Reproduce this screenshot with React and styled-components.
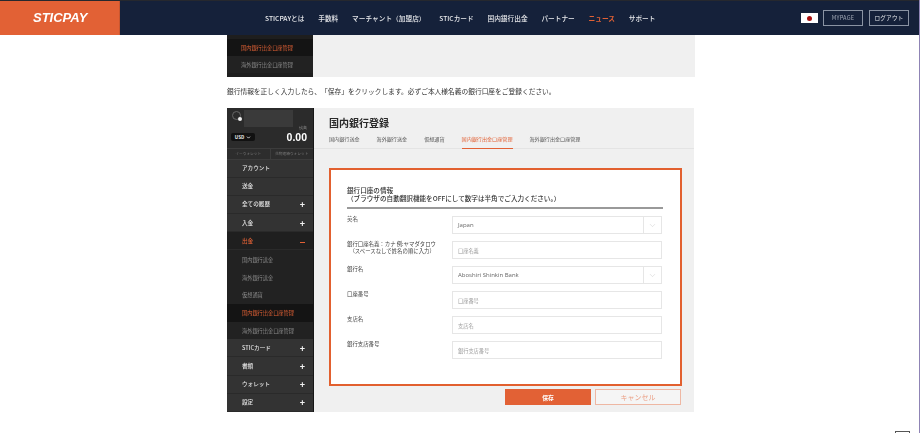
import React from 'react';
import styled, { createGlobalStyle } from 'styled-components';
import { ChevronDown } from 'lucide-react';

const GlobalStyle = createGlobalStyle`
  html, body {
    margin: 0;
    padding: 0;
    background: #fff;
    overflow: hidden;
  }
  body {
    font-family: "Noto Sans CJK JP", "Noto Sans", sans-serif;
    color: #333;
  }
  * {
    box-sizing: border-box;
  }
`;

const Page = styled.div`
  width: 920px;
  height: 433px;
  position: relative;
  overflow: hidden;
  border-right: 1px solid #8f84b5;
  filter: blur(0.3px);
`;

const Header = styled.header`
  height: 35px;
  display: flex;
  background: #15213a;
  border-top: 1px solid #26282e;
`;

const Logo = styled.div`
  width: 120px;
  background: #e26135;
  border-right: 1px solid #c9562f;
  color: #fff;
  font-family: "Liberation Sans", sans-serif;
  font-style: italic;
  font-weight: 700;
  font-size: 13px;
  line-height: 34px;
  padding-left: 33px;
`;

const Nav = styled.nav`
  display: flex;
  align-items: center;
  gap: 13.75px;
  margin-left: 145px;
  height: 34px;
`;

const NavItem = styled.span`
  font-size: 6.7px;
  font-weight: ${p => (p.$active ? 700 : 500)};
  white-space: nowrap;
  color: ${p => (p.$active ? '#e26135' : '#e8e9ec')};
`;

const HeaderRight = styled.div`
  margin-left: auto;
  margin-right: 10px;
  height: 34px;
  display: flex;
  align-items: center;
`;

const Flag = styled.div`
  width: 17px;
  height: 10px;
  background: #fff;
  display: flex;
  align-items: center;
  justify-content: center;
  margin-right: 5px;
  &::after {
    content: '';
    width: 5px;
    height: 5px;
    border-radius: 50%;
    background: #a81010;
  }
`;

const HeaderButton = styled.div`
  width: 40px;
  height: 16px;
  margin-left: ${p => (p.$spaced ? '6px' : '0')};
  border: 1px solid #8a93a3;
  color: ${p => (p.$dim ? '#a3aab7' : '#dfe2e7')};
  font-size: 5.6px;
  display: flex;
  align-items: center;
  justify-content: center;
  letter-spacing: 0.2px;
`;

const Column = styled.main`
  width: 468px;
  margin-left: 227px;
`;

const TopCard = styled.section`
  height: 42px;
  display: flex;
  background: #f0f0f0;
`;

const TopSide = styled.div`
  width: 86px;
  background: #1e1e1e;
  padding-top: 4px;
`;

const Intro = styled.p`
  margin: 0;
  height: 31px;
  font-size: 6.72px;
  line-height: 29px;
  color: #333;
  text-spacing-trim: space-all;
  white-space: nowrap;
`;

const Card = styled.section`
  width: 467px;
  height: 304px;
  display: flex;
  background: #f0f0f0;
`;

const Side = styled.aside`
  width: 87px;
  background: #2d2d2d;
  border-right: 1px solid #161616;
  display: flex;
  flex-direction: column;
`;

const Balance = styled.div`
  height: 40px;
  background: #2b2b2b;
  position: relative;
  padding: 2px 4px 0 17px;
`;

const Avatar = styled.div`
  position: absolute;
  left: 5px;
  top: 3px;
  width: 9px;
  height: 9px;
  border-radius: 50%;
  border: 1px solid #666;
  &::after {
    content: '';
    position: absolute;
    right: -2px;
    bottom: -2px;
    width: 4px;
    height: 4px;
    border-radius: 50%;
    background: #eee;
  }
`;

const NameBox = styled.div`
  width: 49px;
  height: 17px;
  background: #3a3a3a;
`;

const BalanceRow = styled.div`
  position: absolute;
  left: 4px;
  right: 6px;
  top: 24px;
  display: flex;
  justify-content: space-between;
  align-items: center;
`;

const CurrencyPill = styled.div`
  width: 24px;
  height: 8px;
  border-radius: 2px;
  background: #111;
  color: #eee;
  font-size: 4.5px;
  font-weight: 700;
  display: flex;
  align-items: center;
  justify-content: center;
  gap: 2px;
`;

const Amount = styled.div`
  color: #fff;
  font-family: "Liberation Sans", sans-serif;
  font-weight: 700;
  font-size: 10.5px;
  line-height: 10px;
  position: relative;
  &::before {
    content: '残高';
    position: absolute;
    right: 0;
    top: -6px;
    color: #888;
    font-size: 3.6px;
    line-height: 5px;
    font-weight: 400;
  }
`;

const WalletTabs = styled.div`
  height: 12px;
  display: flex;
  border-top: 1px solid #3c3c3c;
  border-bottom: 1px solid #3c3c3c;
`;

const WalletTab = styled.div`
  flex: 1;
  color: #777;
  font-size: 3.7px;
  line-height: 10px;
  text-align: center;
  white-space: nowrap;
  & + & {
    border-left: 1px solid #3c3c3c;
  }
`;

const MenuRow = styled.div`
  height: 18.4px;
  display: flex;
  align-items: center;
  justify-content: space-between;
  padding: 0 8px 0 15px;
  background: #333;
  border-bottom: 1px solid #2a2a2a;
  color: #e4e4e4;
  font-size: 5.6px;
  font-weight: 500;
`;

const OpenRow = styled(MenuRow)`
  background: #1f1f1f;
  color: #e26135;
`;

const SubRow = styled.div`
  height: ${p => (p.$top ? '17px' : '18px')};
  display: flex;
  align-items: center;
  padding-left: ${p => (p.$top ? '14px' : '15px')};
  white-space: nowrap;
  background: ${p => (p.$active ? '#141414' : '#222')};
  color: ${p => (p.$active ? '#e26135' : '#8c8c8c')};
  font-size: 5.2px;
`;

const Sign = styled.span`
  color: #f2f2f2;
  font-family: "Liberation Sans", sans-serif;
  font-size: 9px;
  font-weight: 700;
  line-height: 9px;
  padding-top: 3px;
`;

const MinusSign = styled.span`
  width: 5px;
  height: 1.5px;
  margin-top: 3px;
  background: #e26135;
`;

const Content = styled.div`
  flex: 1;
  display: flex;
  flex-direction: column;
`;

const ContentHead = styled.div`
  height: 41px;
  padding: 7px 0 0 15px;
  border-bottom: 1px solid #e4e4e4;
`;

const Title = styled.h1`
  margin: 0;
  font-size: 10px;
  line-height: 15px;
  font-weight: 700;
  color: #2a2a2a;
`;

const Tabs = styled.div`
  display: flex;
  gap: 17px;
  margin-top: 1px;
`;

const Tab = styled.div`
  height: 18px;
  font-size: 5.1px;
  line-height: 15px;
  white-space: nowrap;
  color: ${p => (p.$active ? '#e26135' : '#555')};
  border-bottom: ${p => (p.$active ? '1px solid #e26135' : '0')};
`;

const FormBox = styled.div`
  width: 353px;
  height: 218px;
  margin: 19px 0 0 15px;
  background: #fff;
  border: 2px solid #e2602f;
  padding: 16px 17px 0 16px;
`;

const FormTitle = styled.div`
  height: 23px;
  border-bottom: 2px solid #999;
  font-size: 6.6px;
  line-height: 8px;
  font-weight: 500;
  color: #333;
  white-space: pre;
`;

const FormRows = styled.div`
  display: flex;
  flex-direction: column;
  gap: 7px;
  margin-top: 7px;
`;

const FormRow = styled.div`
  display: flex;
  height: 18px;
`;

const Label = styled.div`
  width: 105px;
  font-size: 5.4px;
  line-height: 7px;
  color: #444;
  white-space: pre;
`;

const Field = styled.div`
  width: 210px;
  height: 18px;
  background: #fff;
  border: 1px solid #e6e6e6;
  display: flex;
  align-items: center;
  padding-left: 5px;
  font-family: ${p => (p.$value ? '"Open Sans", sans-serif' : 'inherit')};
  font-size: ${p => (p.$value ? '6px' : '5.2px')};
  color: ${p => (p.$value ? '#666' : '#999')};
`;

const FieldText = styled.span`
  flex: 1;
`;

const SelectArrow = styled.span`
  width: 18px;
  height: 16px;
  border-left: 1px solid #e6e6e6;
  color: #bbb;
  display: flex;
  align-items: center;
  justify-content: center;
`;

const Actions = styled.div`
  display: flex;
  gap: 4px;
  justify-content: flex-end;
  width: 352px;
  margin: 3px 0 0 15px;
`;

const SaveButton = styled.div`
  width: 86px;
  height: 16px;
  background: #e26135;
  color: #fff;
  font-size: 5.8px;
  font-weight: 700;
  display: flex;
  align-items: center;
  justify-content: center;
`;

const CancelButton = styled.div`
  width: 86px;
  height: 16px;
  background: #f5f5f5;
  border: 1px solid #eeb7a3;
  color: #eb9e83;
  font-size: 7px;
  display: flex;
  align-items: center;
  justify-content: center;
`;

const ScrollTop = styled.div`
  position: absolute;
  left: 895px;
  top: 431px;
  width: 15px;
  height: 10px;
  border: 1px solid #555;
  background: #fff;
`;

const navItems = ['STICPAYとは', '手数料', 'マーチャント（加盟店）', 'STICカード', '国内銀行出金', 'パートナー', 'ニュース', 'サポート'];
const tabs = ['国内銀行送金', '海外銀行送金', '仮想通貨', '国内銀行出金口座管理', '海外銀行出金口座管理'];

const fields = [
  { label: '英名', text: 'Japan', select: true, value: true },
  { label: '銀行口座名義：カナ 例:ヤマダタロウ\n  （スペースなしで姓名の順に入力）', text: '口座名義' },
  { label: '銀行名', text: 'Aboshiri Shinkin Bank', select: true, value: true },
  { label: '口座番号', text: '口座番号' },
  { label: '支店名', text: '支店名' },
  { label: '銀行支店番号', text: '銀行支店番号' },
];

export default function App() {
  return (
    <Page>
      <GlobalStyle />
      <Header>
        <Logo>STICPAY</Logo>
        <Nav>
          {navItems.map(item => (
            <NavItem key={item} $active={item === 'ニュース'}>{item}</NavItem>
          ))}
        </Nav>
        <HeaderRight>
          <Flag />
          <HeaderButton $dim>MYPAGE</HeaderButton>
          <HeaderButton $spaced>ログアウト</HeaderButton>
        </HeaderRight>
      </Header>

      <Column>
        <TopCard>
          <TopSide>
            <SubRow $active $top>国内銀行出金口座管理</SubRow>
            <SubRow $top>海外銀行出金口座管理</SubRow>
          </TopSide>
        </TopCard>

        <Intro>銀行情報を正しく入力したら、「保存」をクリックします。必ずご本人様名義の銀行口座をご登録ください。</Intro>

        <Card>
          <Side>
            <Balance>
              <Avatar />
              <NameBox />
              <BalanceRow>
                <CurrencyPill>USD <ChevronDown size={5} strokeWidth={4} /></CurrencyPill>
                <Amount>0.00</Amount>
              </BalanceRow>
            </Balance>
            <WalletTabs>
              <WalletTab>イーウォレット</WalletTab>
              <WalletTab>先物連絡ウォレット</WalletTab>
            </WalletTabs>
            <MenuRow>アカウント</MenuRow>
            <MenuRow>送金</MenuRow>
            <MenuRow>全ての履歴<Sign>+</Sign></MenuRow>
            <MenuRow>入金<Sign>+</Sign></MenuRow>
            <OpenRow>出金<MinusSign /></OpenRow>
            <SubRow>国内銀行送金</SubRow>
            <SubRow>海外銀行送金</SubRow>
            <SubRow>仮想通貨</SubRow>
            <SubRow $active>国内銀行出金口座管理</SubRow>
            <SubRow>海外銀行出金口座管理</SubRow>
            <MenuRow>STICカード<Sign>+</Sign></MenuRow>
            <MenuRow>書類<Sign>+</Sign></MenuRow>
            <MenuRow>ウォレット<Sign>+</Sign></MenuRow>
            <MenuRow>設定<Sign>+</Sign></MenuRow>
          </Side>

          <Content>
            <ContentHead>
              <Title>国内銀行登録</Title>
              <Tabs>
                {tabs.map(tab => (
                  <Tab key={tab} $active={tab === '国内銀行出金口座管理'}>{tab}</Tab>
                ))}
              </Tabs>
            </ContentHead>

            <FormBox>
              <FormTitle>{'銀行口座の情報\n（ブラウザの自動翻訳機能をOFFにして数字は半角でご入力ください。）'}</FormTitle>
              <FormRows>
                {fields.map(field => (
                  <FormRow key={field.text}>
                    <Label>{field.label}</Label>
                    <Field $value={field.value}>
                      <FieldText>{field.text}</FieldText>
                      {field.select && (
                        <SelectArrow><ChevronDown size={9} strokeWidth={1} /></SelectArrow>
                      )}
                    </Field>
                  </FormRow>
                ))}
              </FormRows>
            </FormBox>

            <Actions>
              <SaveButton>保存</SaveButton>
              <CancelButton>キャンセル</CancelButton>
            </Actions>
          </Content>
        </Card>
      </Column>

      <ScrollTop />
    </Page>
  );
}
